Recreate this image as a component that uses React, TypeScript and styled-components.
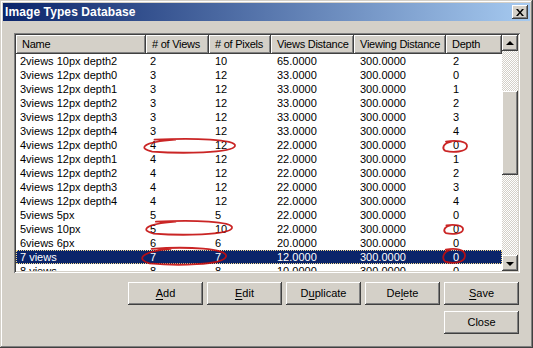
import React from 'react'
import styled, { createGlobalStyle, css } from 'styled-components'

const GlobalStyle = createGlobalStyle`
  html, body {
    margin: 0;
    padding: 0;
    background: #d4d0c8;
  }
  * {
    box-sizing: border-box;
  }
`

const FACE = '#d4d0c8'
const COLS = '130px 63px 62px 83px 92px 56px'
const PADS = [4, 4, 6, 6, 6, 7]

const raised = css`
  background: ${FACE};
  box-shadow: inset -1px -1px #404040, inset 1px 1px #ffffff, inset -2px -2px #808080,
    inset 2px 2px ${FACE};
`

const Window = styled.div`
  position: relative;
  width: 533px;
  height: 348px;
  padding: 3px;
  display: flex;
  flex-direction: column;
  background: ${FACE};
  box-shadow: inset -1px -1px #404040, inset 1px 1px ${FACE}, inset -2px -2px #808080,
    inset 2px 2px #ffffff;
  font-family: 'Liberation Sans', Arial, sans-serif;
  font-size: 11px;
  color: #000;
`

const TitleBar = styled.div`
  height: 18px;
  display: flex;
  align-items: center;
  justify-content: space-between;
  padding: 0 2px;
  background: linear-gradient(90deg, #0a246a 0%, #a6caf0 100%);
`

const Title = styled.span`
  font-weight: bold;
  font-size: 12px;
  color: #fff;
  letter-spacing: 0.1px;
`

const CloseBox = styled.div`
  ${raised};
  width: 16px;
  height: 14px;
  display: flex;
  align-items: center;
  justify-content: center;
`

const Body = styled.div`
  flex: 1;
  display: flex;
  flex-direction: column;
  padding: 12px 10px 11px 11px;
`

const ListBox = styled.div`
  height: 240px;
  padding: 2px;
  display: flex;
  background: #fff;
  box-shadow: inset 1px 1px #808080, inset -1px -1px #ffffff, inset 2px 2px #404040,
    inset -2px -2px ${FACE};
`

const Table = styled.div`
  flex: 1;
  display: flex;
  flex-direction: column;
  overflow: hidden;
`

const HeaderRow = styled.div`
  display: grid;
  grid-template-columns: ${COLS};
  height: 19px;
  flex: none;
`

const HeaderCell = styled.div`
  ${raised};
  display: flex;
  align-items: center;
  padding-left: 6px;
  padding-bottom: 1px;
  letter-spacing: -0.25px;
  white-space: nowrap;
  overflow: hidden;
`

const Rows = styled.div`
  flex: 1;
  overflow: hidden;
`

const Row = styled.div<{ $selected?: boolean }>`
  display: grid;
  grid-template-columns: ${COLS};
  height: 14px;
  line-height: 14px;
  ${({ $selected }) =>
    $selected &&
    css`
      background: #0a246a;
      color: #fff;
      outline: 1px dotted #f3d98c;
      outline-offset: -1px;
    `}
`

const Cell = styled.div<{ $pad: number }>`
  padding-left: ${({ $pad }) => $pad}px;
  white-space: nowrap;
  overflow: hidden;
`

const ScrollBar = styled.div`
  width: 16px;
  flex: none;
  display: flex;
  flex-direction: column;
`

const ScrollButton = styled.div`
  ${raised};
  width: 16px;
  height: 16px;
  flex: none;
  display: flex;
  align-items: center;
  justify-content: center;
`

const Arrow = styled.div<{ $down?: boolean }>`
  width: 0;
  height: 0;
  border-left: 4px solid transparent;
  border-right: 4px solid transparent;
  ${({ $down }) =>
    $down
      ? css`
          border-top: 4px solid #000;
          margin-top: 1px;
        `
      : css`
          border-bottom: 4px solid #000;
          margin-bottom: 1px;
        `}
`

const Track = styled.div`
  flex: 1;
  background: repeating-conic-gradient(#ffffff 0% 25%, ${FACE} 0% 50%) 0 0 / 2px 2px;
`

const Thumb = styled.div<{ $top: number; $size: number }>`
  ${raised};
  margin-top: ${({ $top }) => $top}px;
  height: ${({ $size }) => $size}px;
`

const Buttons = styled.div`
  margin-top: 9px;
  padding-right: 1px;
  display: flex;
  flex-direction: column;
  align-items: flex-end;
  gap: 6px;
`

const ButtonRow = styled.div`
  display: flex;
  gap: 4px;
`

const Button = styled.button`
  ${raised};
  width: 75px;
  height: 23px;
  border: none;
  padding: 0 0 1px;
  font-family: 'Liberation Sans', Arial, sans-serif;
  font-size: 11px;
  color: #000;
  u {
    text-decoration-thickness: 1px;
    text-underline-offset: 2px;
  }
`

const Marks = styled.svg`
  position: absolute;
  left: 0;
  top: 0;
  pointer-events: none;
`

type Item = [string, number, number, string, string, number]

const items: Item[] = [
  ['2views 10px depth2', 2, 10, '65.0000', '300.0000', 2],
  ['3views 12px depth0', 3, 12, '33.0000', '300.0000', 0],
  ['3views 12px depth1', 3, 12, '33.0000', '300.0000', 1],
  ['3views 12px depth2', 3, 12, '33.0000', '300.0000', 2],
  ['3views 12px depth3', 3, 12, '33.0000', '300.0000', 3],
  ['3views 12px depth4', 3, 12, '33.0000', '300.0000', 4],
  ['4views 12px depth0', 4, 12, '22.0000', '300.0000', 0],
  ['4views 12px depth1', 4, 12, '22.0000', '300.0000', 1],
  ['4views 12px depth2', 4, 12, '22.0000', '300.0000', 2],
  ['4views 12px depth3', 4, 12, '22.0000', '300.0000', 3],
  ['4views 12px depth4', 4, 12, '22.0000', '300.0000', 4],
  ['5views 5px', 5, 5, '22.0000', '300.0000', 0],
  ['5views 10px', 5, 10, '22.0000', '300.0000', 0],
  ['6views 6px', 6, 6, '20.0000', '300.0000', 0],
  ['7 views', 7, 7, '12.0000', '300.0000', 0],
  ['8 views', 8, 8, '10.0000', '300.0000', 0],
]

const headers = ['Name', '# of Views', '# of Pixels', 'Views Distance', 'Viewing Distance', 'Depth']

// hand drawn loops around the interesting values
const loops: [number, number, number, number][] = [
  [142, 138, 236, 154],
  [442, 140, 468, 153],
  [144, 220, 233, 236],
  [443, 224, 464, 235],
  [140, 247, 227, 266],
  [442, 248, 466, 264],
]

function loopPath([x1, y1, x2, y2]: [number, number, number, number]) {
  const cx = (x1 + x2) / 2
  const cy = (y1 + y2) / 2
  const rx = (x2 - x1) / 2 - 1
  const ry = (y2 - y1) / 2 - 1
  const p = (a: number, b: number) => `${(cx + rx * a).toFixed(1)} ${(cy + ry * b).toFixed(1)}`
  return [
    `M ${p(-0.75, -0.9)}`,
    `C ${p(0.1, -1.2)} ${p(1.05, -0.95)} ${p(1, 0)}`,
    `C ${p(0.95, 1.05)} ${p(-0.2, 1.1)} ${p(-0.8, 0.8)}`,
    `C ${p(-1.1, 0.4)} ${p(-1.05, -0.55)} ${p(-0.3, -0.9)}`,
  ].join(' ')
}

export default function App() {
  return (
    <>
      <GlobalStyle />
      <Window>
        <TitleBar>
          <Title>Image Types Database</Title>
          <CloseBox>
            <svg width="8" height="7" viewBox="0 0 8 7">
              <path d="M0 0h2l2 2.4 2-2.4h2L5 3.5 8 7H6L4 4.6 2 7H0l3-3.5z" fill="#000" />
            </svg>
          </CloseBox>
        </TitleBar>
        <Body>
          <ListBox>
            <Table>
              <HeaderRow>
                {headers.map((h) => (
                  <HeaderCell key={h}>{h}</HeaderCell>
                ))}
              </HeaderRow>
              <Rows>
                {items.map((it, i) => (
                  <Row key={it[0]} $selected={i === 14}>
                    {it.map((v, c) => (
                      <Cell key={c} $pad={PADS[c]}>
                        {v}
                      </Cell>
                    ))}
                  </Row>
                ))}
              </Rows>
            </Table>
            <ScrollBar>
              <ScrollButton>
                <Arrow />
              </ScrollButton>
              <Track>
                <Thumb $top={40} $size={84} />
              </Track>
              <ScrollButton>
                <Arrow $down />
              </ScrollButton>
            </ScrollBar>
          </ListBox>
          <Buttons>
            <ButtonRow>
              <Button><u>A</u>dd</Button>
              <Button><u>E</u>dit</Button>
              <Button>D<u>u</u>plicate</Button>
              <Button>De<u>l</u>ete</Button>
              <Button><u>S</u>ave</Button>
            </ButtonRow>
            <Button>Close</Button>
          </Buttons>
        </Body>
        <Marks width="533" height="348" viewBox="0 0 533 348">
          {loops.map((l, i) => (
            <path
              key={i}
              d={loopPath(l)}
              fill="none"
              stroke="#c40d0d"
              strokeWidth="1.8"
              strokeLinecap="round"
              opacity="0.9"
            />
          ))}
        </Marks>
      </Window>
    </>
  )
}
